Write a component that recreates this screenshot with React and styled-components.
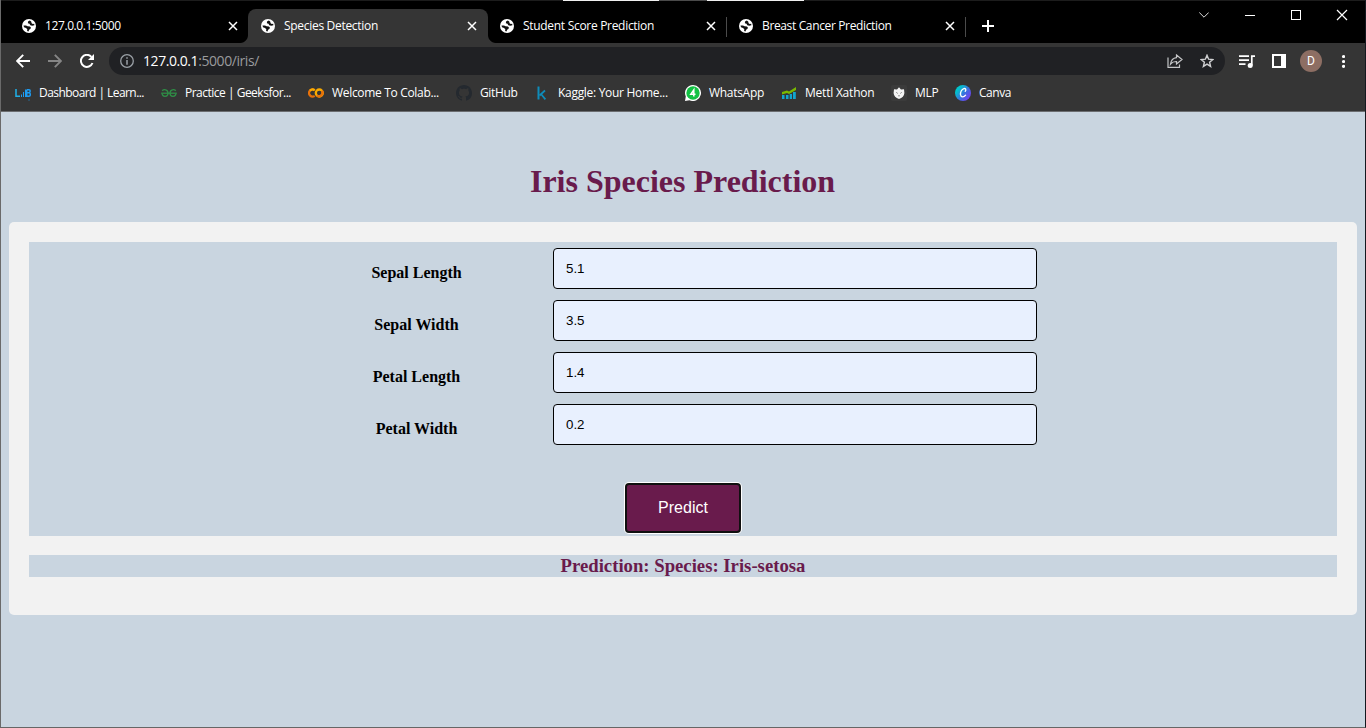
import React from "react";
import styled, { createGlobalStyle } from "styled-components";

const GlobalStyle = createGlobalStyle`
  *, *::before, *::after { box-sizing: border-box; }
  html, body { margin: 0; padding: 0; overflow: hidden; }
  body { background: #c9d5e0; }
`;

const Window = styled.div`
  display: flex;
  flex-direction: column;
  width: 1366px;
  height: 728px;
  border-left: 1px solid #6a6a6a;
  border-right: 1px solid #14181f;
  border-bottom: 1px solid #666;
  background: #c9d5e0;
  font-family: "Open Sans", "Noto Sans", sans-serif;
`;

const TopEdge = styled.div`
  flex: none;
  height: 1px;
  background: linear-gradient(to right, #1c1c1c 562px, #f0f0f0 562px 658px, #4a4a4a 658px 706px, #f0f0f0 706px 803px, #1c1c1c 803px);
`;

const TabStrip = styled.div`
  flex: none;
  display: flex;
  justify-content: space-between;
  height: 42px;
  background: #000;
`;

const Tabs = styled.div`
  display: flex;
  padding: 8px 0 0 8px;
`;

const Tab = styled.div`
  position: relative;
  display: flex;
  align-items: center;
  width: ${(p) => (p.$active ? 240 : 239)}px;
  margin-right: ${(p) => (p.$active ? -1 : 0)}px;
  height: 34px;
  padding: 0 ${(p) => (p.$active ? 12 : 11)}px 0 13px;
  border-radius: 8px 8px 0 0;
  background: ${(p) => (p.$active ? "#353535" : "transparent")};

  &::before,
  &::after {
    content: "";
    display: ${(p) => (p.$active ? "block" : "none")};
    position: absolute;
    bottom: 0;
    width: 8px;
    height: 8px;
  }
  &::before {
    left: -8px;
    background: radial-gradient(circle at 0 0, #000 7.5px, #353535 8.5px);
  }
  &::after {
    right: -8px;
    background: radial-gradient(circle at 100% 0, #000 7.5px, #353535 8.5px);
  }
`;

const TabTitle = styled.span`
  flex: 1;
  padding-left: 9px;
  font-size: 12px;
  line-height: 16px;
  white-space: nowrap;
  color: #fff;
  letter-spacing: ${(p) => p.$track}px;
`;

const TabDivider = styled.span`
  position: absolute;
  right: -1px;
  top: 8px;
  width: 1px;
  height: 20px;
  background: #4b4b4b;
`;

const NewTab = styled.div`
  display: flex;
  align-items: center;
  width: 34px;
  height: 34px;
  padding-left: 17px;
`;

const WindowControls = styled.div`
  display: flex;
  height: 28px;
  align-items: center;
`;

const ControlButton = styled.div`
  display: flex;
  justify-content: center;
  width: 46px;
`;

const Toolbar = styled.div`
  flex: none;
  display: flex;
  align-items: center;
  height: 36px;
  padding-left: 6px;
  background: #353535;
`;

const ToolButton = styled.div`
  flex: none;
  display: flex;
  align-items: center;
  justify-content: center;
  width: 32px;
`;

const AddressBar = styled.div`
  display: flex;
  align-items: center;
  width: 1116px;
  height: 28px;
  margin: 0 6px;
  padding: 0 2px;
  border-radius: 14px;
  background: #202124;
`;

const Address = styled.div`
  flex: 1;
  font-size: 14px;
  line-height: 20px;
  letter-spacing: -0.43px;
  color: #9a9b9d;
`;

const Host = styled.span`
  color: #fff;
`;

const Avatar = styled.div`
  width: 22px;
  height: 22px;
  border-radius: 50%;
  background: #8d6e63;
  color: #fff;
  font: 12px/22px Roboto, sans-serif;
  text-align: center;
`;

const BookmarkBar = styled.div`
  flex: none;
  display: flex;
  align-items: center;
  height: 33px;
  padding: 0 0 5px 14px;
  border-bottom: 1px solid #6b6d70;
  background: #353535;
`;

const Bookmark = styled.div`
  flex: none;
  display: flex;
  align-items: center;
  gap: 8px;
  width: ${(p) => p.$width}px;
`;

const BookmarkLabel = styled.span`
  font-size: 12px;
  line-height: 16px;
  white-space: nowrap;
  color: #fff;
  letter-spacing: ${(p) => p.$track}px;
`;

const Page = styled.main`
  flex: 1;
  padding: 51px 8px 0;
  font-family: "Liberation Serif", "Times New Roman", serif;
  color: #691b4c;
`;

const Title = styled.h1`
  margin: 0 0 22px;
  padding-right: 1px;
  font-size: 32px;
  line-height: 37px;
  text-align: center;
`;

const Card = styled.section`
  height: 393px;
  padding: 20px;
  border-radius: 5px;
  background: #f2f2f2;
`;

const Form = styled.div`
  height: 294px;
  padding-top: 6px;
  background: #c9d5e0;
`;

const Field = styled.div`
  display: flex;
  align-items: flex-start;
  height: 52px;
`;

const Label = styled.label`
  width: 271px;
  margin: 16px 1px 0 252px;
  font-size: 16px;
  line-height: 18px;
  font-weight: bold;
  text-align: center;
  color: #000;
`;

const Input = styled.input`
  width: 484px;
  height: 41px;
  padding: 0 12px;
  border: 1px solid #000;
  border-radius: 4px;
  background: #e8f0fe;
  font: 13.333px "Liberation Sans", Arial, sans-serif;
  color: #000;
`;

const PredictButton = styled.button`
  display: block;
  width: 116px;
  height: 50px;
  margin: 27px auto 0;
  border: 2px solid #101010;
  border-radius: 4px;
  box-shadow: 0 0 0 1px #fff;
  padding: 0;
  background: #691b4c;
  font: 16px "Liberation Sans", Arial, sans-serif;
  color: #fff;
`;

const Result = styled.h3`
  margin: 19px 0 0;
  background: #c9d5e0;
  font-size: 18.72px;
  line-height: 22px;
  text-align: center;
`;

const Globe = () => (
  <svg width="14" height="14" viewBox="0 0 14 14">
    <circle cx="7" cy="7" r="7" fill="#fff" />
    <path
      d="M7.600 1.500Q5.900 2.300 6.300 3.800L8.200 4.600 8.800 6 11 6.400 12.600 5.800 12.300 8.600 10.600 11.200 9 12.400"
      fill="none"
    />
    <path d="M7.800 1.600 6 2.500 5.900 4.200 7.500 4.700 8.300 6.200 10.200 6.700 12.400 6.300 12.200 4.700 10.800 5 9.600 4.200 9.200 2.600z" fill="#111" />
    <path d="M1.500 6.500 4 6.600 5.600 7.300 7.900 7.600 9 8.700 8.300 10.100 7.100 10.700 6.500 12.400 5.100 12.100 5.300 10.300 4 9 2 8.300z" fill="#111" />
  </svg>
);

const Cross = ({ size = 8, w = 1.5, color = "#fff" }) => (
  <svg width={size} height={size} viewBox="0 0 8 8" overflow="visible">
    <path d="M0 0 8 8M8 0 0 8" stroke={color} strokeWidth={w} />
  </svg>
);

const Arrow = ({ flip, color }) => (
  <svg width="14" height="14" viewBox="0 0 14 14" fill="none" stroke={color} strokeWidth="1.9">
    <path d={flip ? "M0 7H13M6.800 .8 13 7 6.800 13.200" : "M14 7H1M7.200 .8 1 7 7.200 13.200"} />
  </svg>
);

const Reload = () => (
  <svg width="14" height="14" viewBox="0 0 14 14">
    <path d="M12.500 9A6 6 0 1 1 11.400 2.900" fill="none" stroke="#fff" strokeWidth="2" />
    <path d="M14 0V6H8z" fill="#fff" />
  </svg>
);

const Info = () => (
  <svg width="14" height="14" viewBox="0 0 14 14">
    <circle cx="7" cy="7" r="6.300" fill="none" stroke="#9aa0a6" strokeWidth="1.300" />
    <path d="M7 3.200V4.800M7 6V10.700" stroke="#9aa0a6" strokeWidth="1.500" />
  </svg>
);

const Share = () => (
  <svg width="16" height="14" viewBox="0 0 16 14" fill="none" stroke="#c4c5c7" strokeWidth="1.200">
    <path d="M1 3.500V13.400H12.500V10.500" />
    <path d="M9.500 1 15 5.500 9.500 10V7.500C6.800 7.400 5 8.300 3.500 10.200 4 6.500 6 4 9.500 3.600z" />
  </svg>
);

const Star = () => (
  <svg width="14" height="14" viewBox="0 0 14 14" fill="none" stroke="#cfd0d2" strokeWidth="1.400">
    <path d="M7 1.300 8.600 5.200 12.800 5.500 9.600 8.200 10.600 12.400 7 10.100 3.400 12.400 4.400 8.200 1.200 5.500 5.400 5.200z" />
  </svg>
);

const Playlist = () => (
  <svg width="16" height="13" viewBox="0 0 16 13">
    <path d="M0 1.200H10M0 5.200H10M0 9.200H6.500" stroke="#fff" strokeWidth="1.700" />
    <path d="M12.800 10.500V1.100H16" fill="none" stroke="#fff" strokeWidth="1.700" />
    <circle cx="11.200" cy="10.400" r="2.500" fill="#fff" />
  </svg>
);

const SidePanel = () => (
  <svg width="14" height="14" viewBox="0 0 14 14">
    <path d="M0 0H14V14H0zM2 2V12H9V2z" fill="#fff" fillRule="evenodd" />
  </svg>
);

const Dots = () => (
  <svg width="4" height="14" viewBox="0 0 4 14" fill="#fff">
    <circle cx="2.500" cy="2.500" r="1.600" />
    <circle cx="2.500" cy="7.500" r="1.600" />
    <circle cx="2.500" cy="12.300" r="1.600" />
  </svg>
);

const LabIcon = () => (
  <svg width="16" height="16" viewBox="0 0 16 16" fill="none" stroke="#1e9bf0" strokeWidth="1.500">
    <path d="M1 4V11.300H5" stroke="#1fb0e8" />
    <path d="M6.500 12V9.500M8.500 12V7M10.500 12V4.500" strokeWidth="1" />
    <path d="M11.700 4.700H14Q15.200 4.700 15.200 6T14 7.700H11.700H14Q15.300 7.800 15.300 9.500T14 11.300H11.700V4.700" />
    <path d="M13.500 15H15.500" strokeWidth="1" strokeDasharray="1 1" />
  </svg>
);

const GfgIcon = () => (
  <svg width="16" height="16" viewBox="0 0 16 16" fill="none" stroke="#2f8d46" strokeWidth="1.300">
    <path d="M.2 8.200H15.800" />
    <path d="M1.200 5.800C2.600 4.200 7 4 7 8.200 7 12.300 1.200 12.200 1.100 8.500" />
    <path d="M14.800 5.800C13.400 4.200 9 4 9 8.200 9 12.300 14.800 12.200 14.900 8.500" />
  </svg>
);

const ColabIcon = () => (
  <svg width="16" height="16" viewBox="0 0 16 16" fill="none" strokeWidth="2.300">
    <circle cx="11.300" cy="8" r="3.500" stroke="#f9ab00" />
    <path d="M6.700 5.200A3.500 3.500 0 1 0 6.700 10.800" stroke="#e8710a" />
    <path d="M2 5.600A3.500 3.500 0 0 1 6.700 5.300" stroke="#f9ab00" />
    <path d="M8.900 10.500A3.500 3.500 0 0 0 13.800 5.600" stroke="#e8710a" />
  </svg>
);

const GitHubIcon = () => (
  <svg width="16" height="16" viewBox="0 0 16 16">
    <path
      fill="#24292f"
      d="M8 0C3.580 0 0 3.580 0 8c0 3.540 2.290 6.530 5.470 7.590.4.070.55-.17.55-.38 0-.19-.01-.82-.01-1.490-2.010.37-2.530-.49-2.690-.94-.09-.23-.48-.94-.82-1.130-.28-.15-.68-.52-.01-.53.63-.01 1.080.58 1.230.82.72 1.210 1.870.87 2.330.66.07-.52.28-.87.51-1.070-1.780-.2-3.640-.89-3.640-3.950 0-.87.31-1.590.82-2.150-.08-.2-.36-1.020.08-2.120 0 0 .67-.21 2.200.82.64-.18 1.320-.27 2-.27s1.360.09 2 .27c1.530-1.040 2.200-.82 2.200-.82.44 1.100.16 1.920.08 2.120.51.56.82 1.270.82 2.150 0 3.070-1.870 3.750-3.650 3.950.29.25.54.73.54 1.480 0 1.070-.01 1.930-.01 2.200 0 .21.15.46.55.38A8.010 8.010 0 0 0 16 8c0-4.420-3.580-8-8-8z"
    />
  </svg>
);

const KaggleIcon = () => (
  <svg width="16" height="16" viewBox="0 0 16 16" fill="none" stroke="#0e8cba" strokeWidth="2">
    <path d="M4.500 1.500V14.500" />
    <path d="M11 5.500 5.500 10.500M7 9 11.400 14.400" strokeWidth="1.700" />
  </svg>
);

const WhatsAppIcon = () => (
  <svg width="16" height="16" viewBox="0 0 16 16">
    <path d="M8 0A8 8 0 1 1 4.500 15.200L0 16 .8 11.500A8 8 0 0 1 8 0z" fill="#fff" />
    <circle cx="8" cy="8" r="6.700" fill="#12c143" />
    <path d="M8.800 11.500V5L5.800 9.300H10.500" fill="none" stroke="#fff" strokeWidth="1.500" />
  </svg>
);

const MettlIcon = () => (
  <svg width="16" height="16" viewBox="0 0 16 16">
    <path d="M1 10H3.500V14H1zM5 10H7.500V14H5zM8.700 9H11V14H8.700zM12 7H14.800V14H12z" fill="#12a5cf" />
    <path d="M1 9.500V7L6 5.500 8 6.500 15 2V5L8 9 6 8z" fill="#7ab800" />
  </svg>
);

const MlpIcon = () => (
  <svg width="16" height="16" viewBox="0 0 16 16">
    <rect width="16" height="16" rx="2" fill="#3b3b3b" />
    <path d="M3 4.200 6 4.500 8 2.200 10 4.500 13 4.200 13.400 8Q13 12.500 8 14 3 12.500 2.600 8z" fill="#f3f3f3" />
    <path d="M5.500 7.500 6.500 8.300M10.500 7.500 9.500 8.300M7.400 10.800H8.600" stroke="#555" strokeWidth="1" />
  </svg>
);

const CanvaIcon = () => (
  <svg width="16" height="16" viewBox="0 0 16 16">
    <defs>
      <linearGradient id="canva" x1="0" y1="0.200" x2="1" y2="1">
        <stop offset="0.150" stopColor="#00c4cc" />
        <stop offset="0.550" stopColor="#4169e1" />
        <stop offset="1" stopColor="#8b2cf5" />
      </linearGradient>
    </defs>
    <circle cx="8" cy="8" r="8" fill="url(#canva)" />
    <path
      d="M10.200 6.300C11.700 4.500 10.400 3.200 8.900 3.600 6.500 4.200 5.200 7.400 5.500 9.700 5.900 12.600 8.800 12.500 10.600 10.200"
      fill="none"
      stroke="#fff"
      strokeWidth="1.300"
      strokeLinecap="round"
    />
  </svg>
);

const TABS = [
  { title: "127.0.0.1:5000", track: -0.4 },
  { title: "Species Detection", track: -0.3, active: true },
  { title: "Student Score Prediction", track: -0.3, divider: true },
  { title: "Breast Cancer Prediction", track: -0.36, divider: true },
];

const BOOKMARKS = [
  { label: "Dashboard | Learn...", Icon: LabIcon, width: 146, track: -0.56 },
  { label: "Practice | Geeksfor...", Icon: GfgIcon, width: 147, track: -0.5 },
  { label: "Welcome To Colab...", Icon: ColabIcon, width: 148, track: -0.32 },
  { label: "GitHub", Icon: GitHubIcon, width: 78, track: -0.35 },
  { label: "Kaggle: Your Home...", Icon: KaggleIcon, width: 151, track: -0.3 },
  { label: "WhatsApp", Icon: WhatsAppIcon, width: 96, track: -0.3 },
  { label: "Mettl Xathon", Icon: MettlIcon, width: 110, track: -0.22 },
  { label: "MLP", Icon: MlpIcon, width: 64, track: -0.3 },
  { label: "Canva", Icon: CanvaIcon, width: 60, track: -0.45 },
];

const FIELDS = [
  ["Sepal Length", "5.1"],
  ["Sepal Width", "3.5"],
  ["Petal Length", "1.4"],
  ["Petal Width", "0.2"],
];

export default function App() {
  return (
    <Window>
      <GlobalStyle />
      <TopEdge />
      <TabStrip>
        <Tabs>
          {TABS.map((t) => (
            <Tab key={t.title} $active={t.active}>
              <Globe />
              <TabTitle $track={t.track}>{t.title}</TabTitle>
              <Cross />
              {t.divider && <TabDivider />}
            </Tab>
          ))}
          <NewTab>
            <svg width="12" height="12" viewBox="0 0 12 12">
              <path d="M6 0V12M0 6H12" stroke="#fff" strokeWidth="2" />
            </svg>
          </NewTab>
        </Tabs>
        <WindowControls>
          <ControlButton>
            <svg width="10" height="6" viewBox="0 0 10 6">
              <path d="M.3 .5 5 5.200 9.700 .5" fill="none" stroke="#ddd" />
            </svg>
          </ControlButton>
          <ControlButton>
            <svg width="10" height="1" viewBox="0 0 10 1">
              <rect width="10" height="1" fill="#fff" />
            </svg>
          </ControlButton>
          <ControlButton>
            <svg width="10" height="10" viewBox="0 0 10 10">
              <rect x=".5" y=".5" width="9" height="9" fill="none" stroke="#fff" />
            </svg>
          </ControlButton>
          <ControlButton>
            <Cross size={10} w={0.95} />
          </ControlButton>
        </WindowControls>
      </TabStrip>
      <Toolbar>
        <ToolButton><Arrow color="#fff" /></ToolButton>
        <ToolButton><Arrow flip color="#868686" /></ToolButton>
        <ToolButton><Reload /></ToolButton>
        <AddressBar>
          <ToolButton><Info /></ToolButton>
          <Address><Host>127.0.0.1</Host>:5000/iris/</Address>
          <ToolButton><Share /></ToolButton>
          <ToolButton><Star /></ToolButton>
        </AddressBar>
        <ToolButton><Playlist /></ToolButton>
        <ToolButton><SidePanel /></ToolButton>
        <ToolButton><Avatar>D</Avatar></ToolButton>
        <ToolButton><Dots /></ToolButton>
      </Toolbar>
      <BookmarkBar>
        {BOOKMARKS.map(({ label, Icon, width, track }) => (
          <Bookmark key={label} $width={width}>
            <Icon />
            <BookmarkLabel $track={track}>{label}</BookmarkLabel>
          </Bookmark>
        ))}
      </BookmarkBar>
      <Page>
        <Title>Iris Species Prediction</Title>
        <Card>
          <Form>
            {FIELDS.map(([label, value]) => (
              <Field key={label}>
                <Label>{label}</Label>
                <Input defaultValue={value} />
              </Field>
            ))}
            <PredictButton>Predict</PredictButton>
          </Form>
          <Result>Prediction: Species: Iris-setosa</Result>
        </Card>
      </Page>
    </Window>
  );
}
